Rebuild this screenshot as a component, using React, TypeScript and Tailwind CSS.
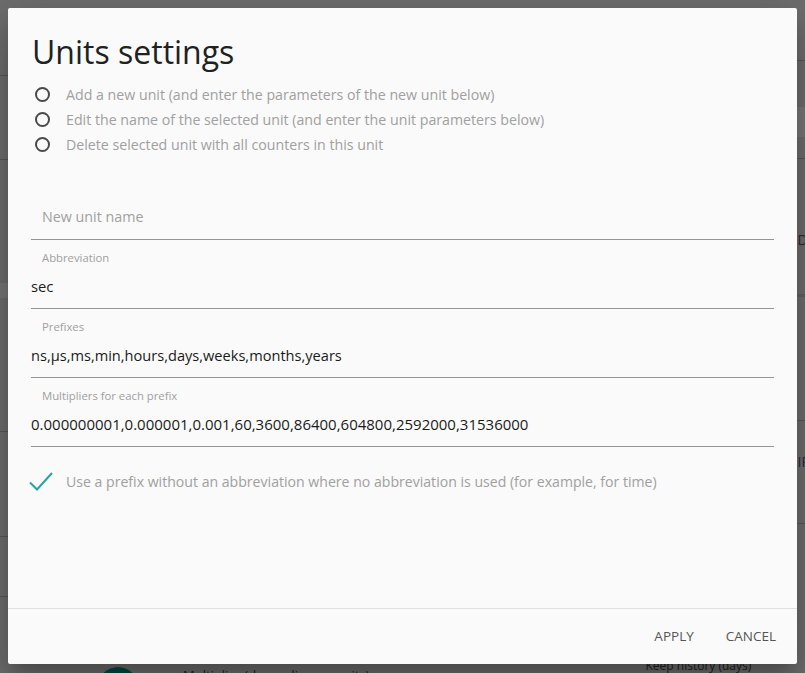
import React, { useState } from 'react';

const font = { fontFamily: '"Open Sans", "Noto Sans", Arial, sans-serif' };

const modes = [
  'Add a new unit (and enter the parameters of the new unit below)',
  'Edit the name of the selected unit (and enter the unit parameters below)',
  'Delete selected unit with all counters in this unit',
];

interface FieldProps {
  label: string;
  value: string;
  size?: string;
}

const Field: React.FC<FieldProps> = ({ label, value, size = 'text-[14.8px]' }) => (
  <div className="flex flex-col border-b border-[#949494] pt-[10px] pb-[12px]">
    <div className="h-[16px] pl-[11px] text-[11.3px] leading-[16px] text-[#a0a0a0]">{label}</div>
    <div className={`mt-[10px] h-[20px] leading-[20px] text-[#1a1a1a] ${size}`}>{value}</div>
  </div>
);

const App: React.FC = () => {
  const [usePrefix, setUsePrefix] = useState(true);

  return (
    <div className="relative h-[673px] w-[805px] overflow-hidden bg-[#dcdcdc]" style={font}>
      {/* page under the dialog */}
      <div className="grid grid-cols-2">
        <div className="flex flex-col">
          <div className="h-[76px] border-b border-[#b0b0b0]" />
          <div className="h-[84px] border-b border-[#b0b0b0]" />
          <div className="h-[123px]" />
          <div className="h-[15px] bg-[#eeeeee]" />
          <div className="h-[134px] border-b border-[#b0b0b0]" />
          <div className="h-[105px] border-b border-[#b0b0b0]" />
          <div className="h-[60px] border-b border-[#b0b0b0]" />
          <div className="flex items-start pt-[69px] pl-[98px]">
            <div className="mt-[1px] h-[40px] w-[40px] rounded-full bg-[#009688]" />
            <div className="ml-[45px] text-[13px] text-[#444]">Multiplier (depending on units)</div>
          </div>
        </div>
        <div className="flex flex-col">
          <div className="h-[61px] border-b border-[#b0b0b0]" />
          <div className="h-[46px]" />
          <div className="h-[30px] bg-[#f0f0f0]" />
          <div className="h-[22px] border-b border-[#b0b0b0]" />
          <div className="h-[138px] border-b-[3px] border-[#c4c4c4] pt-[70px] pl-[395px] text-[14px] text-[#555]">D</div>
          <div className="h-[124px] border-b border-[#b0b0b0]" />
          <div className="h-[103px] border-b border-[#b0b0b0] pt-[30px] pl-[395px] text-[14px] text-[#555]">IP</div>
          <div className="h-[140px] pt-[133px] pl-[243px] text-[12px] text-[#444]">Keep history (days)</div>
        </div>
      </div>

      <div className="absolute inset-0 bg-black/50" />

      {/* dialog */}
      <div className="absolute left-[8px] top-[8px] flex h-[656px] w-[789px] flex-col rounded-[2px] bg-[#fafafa] shadow-[0_11px_15px_-7px_rgba(0,0,0,0.2),0_24px_38px_3px_rgba(0,0,0,0.14),0_9px_46px_8px_rgba(0,0,0,0.12)]">
        <div className="flex flex-1 flex-col border-b border-[#e0e0e0] px-[23px] pt-[24px]">
          <h2 className="h-[40px] pl-px text-[32px] leading-[40px] text-[#212121]">Units settings</h2>

          <div className="mt-[10px] flex flex-col">
            {modes.map(m => (
              <label key={m} className="flex h-[25px] items-center">
                <span className="ml-[4px] h-[15px] w-[15px] rounded-full border-2 border-[#4a4a4a]" />
                <span className="ml-[16px] text-[14.2px] text-[#a0a0a0]">{m}</span>
              </label>
            ))}
          </div>

          <div className="mt-[14px] flex flex-col border-b border-[#949494] pb-[12px] pt-[36px]">
            <div className="h-[20px] pl-[11px] text-[14.3px] leading-[20px] text-[#a0a0a0]">New unit name</div>
          </div>
          <Field label="Abbreviation" value="sec" />
          <Field label="Prefixes" value="ns,µs,ms,min,hours,days,weeks,months,years" size="text-[14.6px]" />
          <Field
            label="Multipliers for each prefix"
            value="0.000000001,0.000001,0.001,60,3600,86400,604800,2592000,31536000"
            size="text-[15px]"
          />

          <label className="mt-[23px] flex h-[24px] items-center" onClick={() => setUsePrefix(!usePrefix)}>
            <svg width="24" height="24" viewBox="0 0 24 24" className="-ml-[2px]">
              {usePrefix && (
                <path d="M1 12.5 L8 19.5 L23 3" fill="none" stroke="#26a69a" strokeWidth="2" />
              )}
            </svg>
            <span className="ml-[13px] text-[14.1px] text-[#a0a0a0]">
              Use a prefix without an abbreviation where no abbreviation is used (for example, for time)
            </span>
          </label>
        </div>

        <div className="flex h-[55px] items-center justify-end pr-[5px]">
          <button className="px-[16px] text-[13.5px] text-[#555]">APPLY</button>
          <button className="px-[16px] text-[13.5px] text-[#555]">CANCEL</button>
        </div>
      </div>
    </div>
  );
};

export default App;
